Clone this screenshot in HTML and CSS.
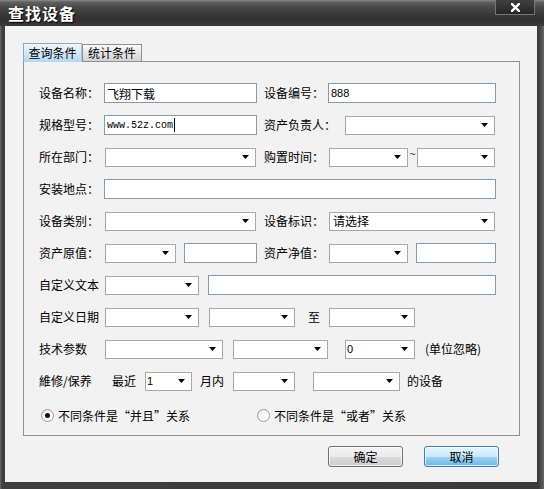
FILE: index.html
```html
<!DOCTYPE html>
<html lang="zh-CN">
<head>
<meta charset="utf-8">
<title>查找设备</title>
<link rel="stylesheet" href="styles.css">
</head>
<body>
<div class="window">
  <div class="titlebar">
    <span class="title">查找设备</span>
    <div class="close">
      <svg width="9" height="9" viewBox="0 0 9 9"><path d="M1 1 L8 8 M8 1 L1 8" stroke="#fff" stroke-width="2.4" stroke-linecap="square"/></svg>
    </div>
  </div>
  <div class="client">
    <div class="tabs">
      <div class="tab active">查询条件</div>
      <div class="tab">统计条件</div>
    </div>
    <div class="panel">
      <div class="row">
        <span class="lbl w65">设备名称：</span>
        <div class="input w153">飞翔下载</div>
        <span class="lbl ml7 w64">设备编号：</span>
        <div class="input w168 num">888</div>
      </div>
      <div class="row">
        <span class="lbl w65">规格型号：</span>
        <div class="input w153 mono">www.52z.com<span class="caret"></span></div>
        <span class="lbl ml7 w81">资产负责人：</span>
        <div class="select w150"><span class="val"></span><i class="arrow"></i></div>
      </div>
      <div class="row">
        <span class="lbl w65">所在部门：</span>
        <div class="select ml1 w151"><span class="val"></span><i class="arrow"></i></div>
        <span class="lbl ml8 w65">购置时间：</span>
        <div class="select w79"><span class="val"></span><i class="arrow"></i></div>
        <span class="tilde">~</span>
        <div class="select w78"><span class="val"></span><i class="arrow"></i></div>
      </div>
      <div class="row">
        <span class="lbl w65">安装地点：</span>
        <div class="input w392"></div>
      </div>
      <div class="row">
        <span class="lbl w65">设备类别：</span>
        <div class="select ml1 w151"><span class="val"></span><i class="arrow"></i></div>
        <span class="lbl ml8 w65">设备标识：</span>
        <div class="select w166"><span class="val pad3">请选择</span><i class="arrow"></i></div>
      </div>
      <div class="row">
        <span class="lbl w65">资产原值：</span>
        <div class="select ml1 w71"><span class="val"></span><i class="arrow"></i></div>
        <div class="input ml8 w73"></div>
        <span class="lbl ml7 w65">资产净值：</span>
        <div class="select w79"><span class="val"></span><i class="arrow"></i></div>
        <div class="input ml8 w80"></div>
      </div>
      <div class="row">
        <span class="lbl w65">自定义文本</span>
        <div class="select ml1 w94"><span class="val"></span><i class="arrow"></i></div>
        <div class="input ml9 w288"></div>
      </div>
      <div class="row">
        <span class="lbl w65">自定义日期</span>
        <div class="select ml1 w94"><span class="val"></span><i class="arrow"></i></div>
        <div class="select ml10 w86"><span class="val"></span><i class="arrow"></i></div>
        <span class="lbl ml13 w12">至</span>
        <div class="select ml9 w86"><span class="val"></span><i class="arrow"></i></div>
      </div>
      <div class="row">
        <span class="lbl w65">技术参数</span>
        <div class="select ml1 w118"><span class="val"></span><i class="arrow"></i></div>
        <div class="select ml10 w95"><span class="val"></span><i class="arrow"></i></div>
        <div class="select ml17 w70"><span class="val num">0</span><i class="arrow"></i></div>
        <span class="lbl ml10">(单位忽略)</span>
      </div>
      <div class="row">
        <span class="lbl w73">維修/保养</span>
        <span class="lbl w33">最近</span>
        <div class="select w47"><span class="val num">1</span><i class="arrow"></i></div>
        <span class="lbl ml8 w33">月内</span>
        <div class="select w62"><span class="val"></span><i class="arrow"></i></div>
        <div class="select ml18 w87"><span class="val"></span><i class="arrow"></i></div>
        <span class="lbl ml7">的设备</span>
      </div>
      <div class="radio-row">
        <div class="radio"><span class="circle checked"></span><span>不同条件是<span class="oq">“</span>并且<span class="cq">”</span>关系</span></div>
        <div class="radio second"><span class="circle"></span><span>不同条件是<span class="oq">“</span>或者<span class="cq">”</span>关系</span></div>
      </div>
    </div>
    <div class="buttons">
      <div class="btn">确定</div>
      <div class="btn primary">取消</div>
    </div>
  </div>
</div>
</body>
</html>
```

FILE: styles.css
```css
* { box-sizing: border-box; }
html, body { margin: 0; padding: 0; }
body {
  width: 544px;
  height: 489px;
  overflow: hidden;
  background: #ffffff;
  font-family: "Noto Sans CJK SC", "Liberation Sans", sans-serif;
  font-size: 12px;
  color: #000;
}
.window {
  width: 544px;
  height: 489px;
  display: flex;
  flex-direction: column;
  background: linear-gradient(to right, #6a6a6a 0, #3e3e3e 2px, #3a3a3a 538px, #555 542px, #6a6a6a 544px);
}
.titlebar {
  height: 26px;
  flex: none;
  position: relative;
  display: flex;
  align-items: center;
  padding-left: 8px;
  background: linear-gradient(#8c8c8c 0, #626262 2px, #4a4a4a 7px, #383838 14px, #303030 20px, #3a3a3a 26px);
}
.title {
  color: #fff;
  font-weight: bold;
  font-size: 16px;
  letter-spacing: 1px;
  text-shadow: 1px 1px 1px #000;
  line-height: 20px;
}
.close {
  position: absolute;
  left: 495px;
  top: 0;
  width: 40px;
  height: 15px;
  border: 1px solid #767676;
  border-top: none;
  background: linear-gradient(#404040, #262626);
  display: flex;
  align-items: center;
  justify-content: center;
}
.close svg { display: block; }
.client {
  flex: 1;
  margin: 0 7px 7px 5px;
  background: #f2f2f2;
  padding: 17px 0 0 18px;
  display: flex;
  flex-direction: column;
}
.tabs {
  display: flex;
  align-items: flex-end;
  height: 18px;
  position: relative;
  z-index: 1;
}
.tab {
  height: 17px;
  width: 60px;
  border: 1px solid #8e8e8e;
  border-bottom: none;
  background: linear-gradient(#fbfbfb, #e6e6e6 50%, #d2d2d2);
  display: flex;
  align-items: center;
  justify-content: center;
  line-height: 14px;
}
.tab.active {
  width: 59px;
  height: 19px;
  margin-bottom: -1px;
  border-color: #86a9cc;
  border-right-color: #a9c3dc;
  background: linear-gradient(#eef6fd, #d3e8f8 50%, #b4d6f2);
}
.panel {
  width: 497px;
  height: 375px;
  border: 1px solid #8f8f8f;
  padding: 21px 0 0 15px;
  display: flex;
  flex-direction: column;
  gap: 12px;
}
.row {
  height: 20px;
  display: flex;
  align-items: center;
}
.lbl {
  flex: none;
  white-space: nowrap;
  line-height: 20px;
}
.input {
  flex: none;
  height: 20px;
  border: 1px solid #7f9db9;
  background: #fff;
  padding-left: 2px;
  display: flex;
  align-items: center;
  white-space: nowrap;
}
.select {
  flex: none;
  height: 19px;
  border: 1px solid #a9a9a3;
  background: #fff;
  display: flex;
  align-items: center;
}
.val {
  flex: 1;
  padding-left: 1px;
  white-space: nowrap;
  line-height: 16px;
}
.val.pad3 { padding-left: 3px; }
.arrow {
  width: 7px;
  height: 4px;
  background: #000;
  clip-path: polygon(0 0, 100% 0, 50% 100%);
  margin-right: 6px;
  flex: none;
}
.num { font-family: "Liberation Sans", sans-serif; font-size: 11px; }
.mono { font-family: "Liberation Mono", monospace; font-size: 10px; }
.caret {
  display: inline-block;
  width: 1px;
  height: 14px;
  background: #000;
  margin-left: 1px;
}
.tilde {
  flex: none;
  width: 9px;
  height: 20px;
  line-height: 14px;
  font-family: "Liberation Sans", sans-serif;
  font-size: 11px;
  text-align: center;
  color: #333;
}
.radio-row {
  margin-top: 4px;
  height: 16px;
  display: flex;
  align-items: center;
}
.radio {
  display: flex;
  align-items: center;
  gap: 4px;
  white-space: nowrap;
  margin-left: 2px;
}
.radio.second { margin-left: 67px; }
.circle {
  width: 13px;
  height: 13px;
  border-radius: 50%;
  border: 1px solid #9a9a9a;
  background: linear-gradient(135deg, #e6e6e6, #fff 60%);
  display: flex;
  align-items: center;
  justify-content: center;
  flex: none;
}
.circle.checked::after {
  content: "";
  width: 5px;
  height: 5px;
  border-radius: 50%;
  background: #111;
}
.oq, .cq { display: inline-block; width: 12px; }
.oq { text-align: right; }
.cq { text-align: left; }
.buttons {
  display: flex;
  justify-content: flex-end;
  gap: 21px;
  margin-top: 10px;
  padding-right: 38px;
}
.btn {
  width: 75px;
  height: 21px;
  border: 1px solid #707070;
  border-radius: 3px;
  background: linear-gradient(#f3f3f3, #ebebeb 50%, #dcdcdc 50%, #cdcdcd);
  display: flex;
  align-items: center;
  justify-content: center;
  box-shadow: inset 0 0 0 1px rgba(255,255,255,0.7);
}
.btn.primary {
  border-color: #3c7fb1;
  background: linear-gradient(#e6f5fd, #c9e9f9 50%, #9fd5f2 50%, #6cb8e2);
}
.w12 { width: 12px; }
.w33 { width: 33px; }
.w47 { width: 47px; }
.w62 { width: 62px; }
.w64 { width: 64px; }
.w65 { width: 65px; }
.w70 { width: 70px; }
.w71 { width: 71px; }
.w73 { width: 73px; }
.w78 { width: 78px; }
.w79 { width: 79px; }
.w80 { width: 80px; }
.w81 { width: 81px; }
.w86 { width: 86px; }
.w87 { width: 87px; }
.w94 { width: 94px; }
.w95 { width: 95px; }
.w118 { width: 118px; }
.w150 { width: 150px; }
.w151 { width: 151px; }
.w153 { width: 153px; }
.w166 { width: 166px; }
.w168 { width: 168px; }
.w288 { width: 288px; }
.w392 { width: 392px; }
.ml1 { margin-left: 1px; }
.ml7 { margin-left: 7px; }
.ml8 { margin-left: 8px; }
.ml9 { margin-left: 9px; }
.ml10 { margin-left: 10px; }
.ml13 { margin-left: 13px; }
.ml17 { margin-left: 17px; }
.ml18 { margin-left: 18px; }
```
